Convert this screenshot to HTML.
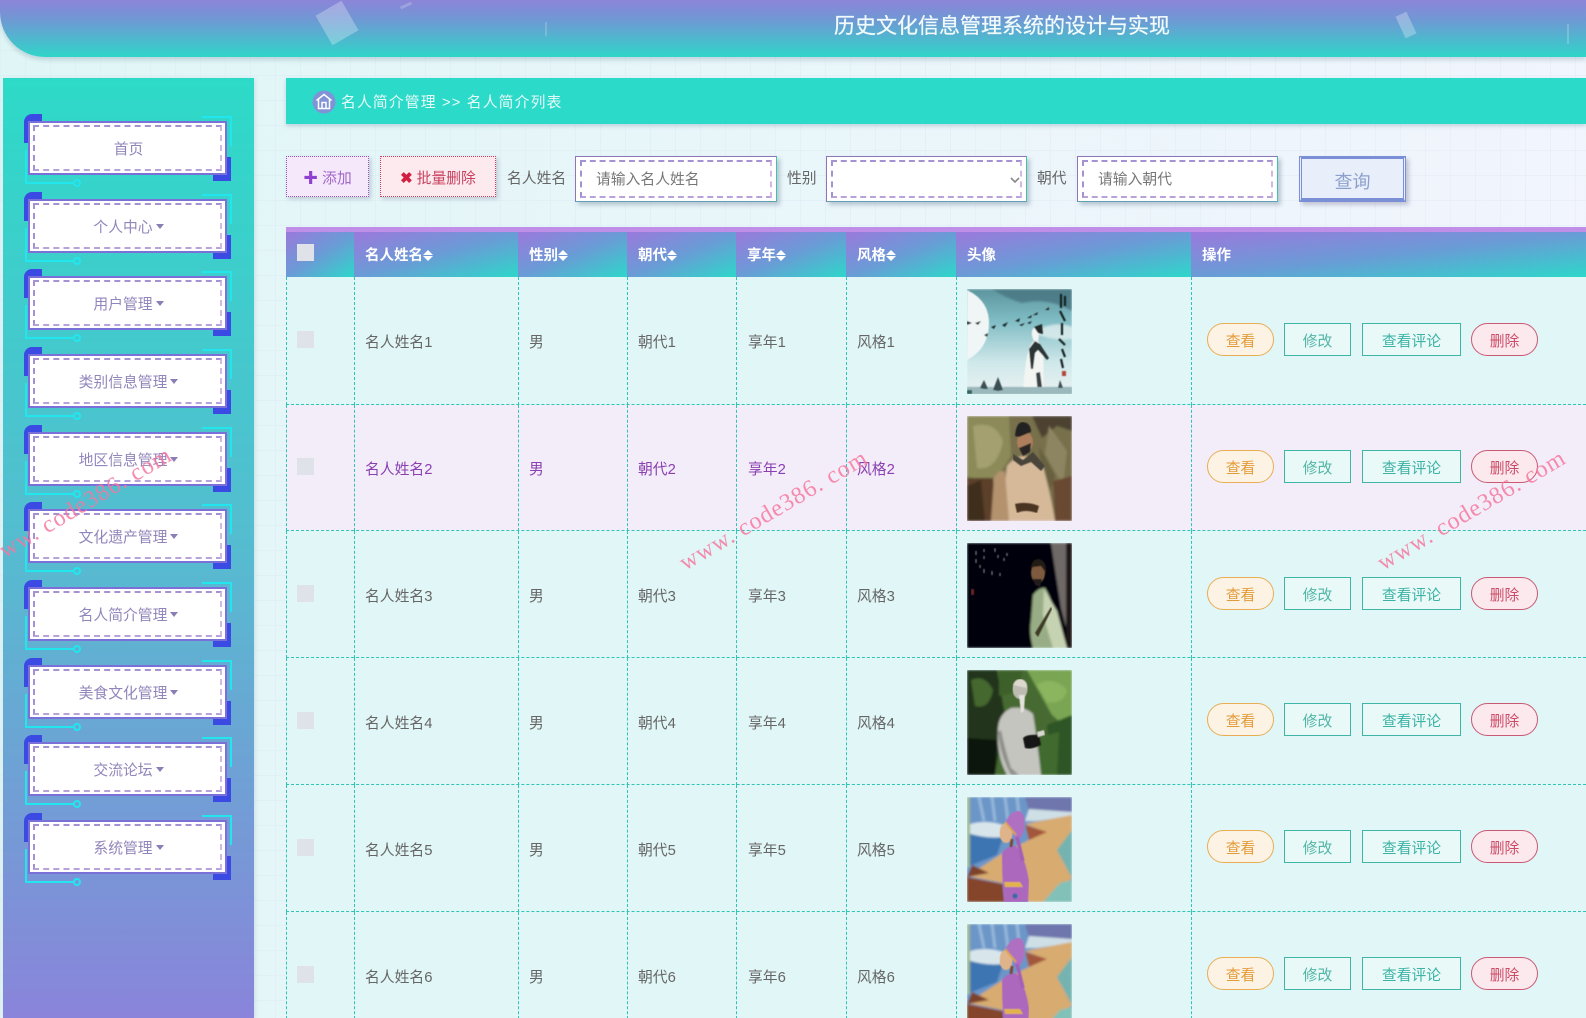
<!DOCTYPE html>
<html lang="zh"><head><meta charset="utf-8"><title>历史文化信息管理系统的设计与实现</title>
<style>
*{box-sizing:border-box}
html,body{margin:0;padding:0;width:1586px;height:1018px;overflow:hidden}
body{position:relative;font-family:"Liberation Sans","Noto Sans CJK SC",sans-serif;font-size:14.8px;color:#666;
background-color:#eaf6fb;background-image:linear-gradient(rgba(215,228,240,.3) 1px,transparent 1px),linear-gradient(90deg,rgba(215,228,240,.3) 1px,transparent 1px),linear-gradient(100deg,#e0f6f6,#f3f5fe);background-size:25px 25px,25px 25px,100% 100%}
.abs{position:absolute}
#hd{left:0;top:0;width:1586px;height:57px;background:linear-gradient(180deg,#8c84d8 0%,#6f99d4 35%,#2fd5c9 100%);border-bottom-left-radius:45px;box-shadow:0 3px 5px rgba(120,150,170,.35);overflow:hidden}
#hd .t{position:absolute;left:834px;top:11px;font-size:21px;line-height:31px;color:#f2fbfb;white-space:nowrap;-webkit-text-stroke:.25px #f2fbfb}
#hd i{position:absolute;background:rgba(255,255,255,.28)}
#sb{left:3px;top:78px;width:251px;height:940px;background:linear-gradient(180deg,#2ddac8 0%,#55bcd0 50%,#8a84da 100%);box-shadow:1px 1px 4px rgba(120,150,170,.25)}
.it{position:absolute;left:24px;width:208px;height:74px}
.it b{position:absolute;display:block}
.tl{left:0;top:0;width:18px;height:29px;border-left:4px solid #3a4ae2;border-top:7px solid #3a4ae2;border-top-left-radius:8px}
.br{left:189px;top:43px;width:18px;height:24px;border-right:5px solid #3a4ae2;border-bottom:6px solid #3a4ae2}
.tr{left:178px;top:2px;width:30px;height:30px;border-top:2px solid #22e6ee;border-right:2px solid #22e6ee}
.bl{left:1px;top:36px;width:50px;height:34px;border-left:2px solid #22e6ee;border-bottom:2px solid #22e6ee}
.dot{left:49px;top:65px;width:8px;height:8px;border-radius:50%;border:2px solid #22e6ee}
.bx{position:absolute;left:4px;top:7px;width:199px;height:54px;background:#fff;border:2px solid #7a70d8;color:#9186bb;font-size:14.8px;display:flex;align-items:center;justify-content:center;white-space:nowrap;padding-left:2px}
.bx:after{content:"";position:absolute;left:3px;top:2px;right:3px;bottom:2px;border:2px dashed;border-color:#a592d2 #d3b8e6 #b7a2da #a592d2}
.bx s{display:inline-block;width:0;height:0;margin-left:3px;border:4px solid transparent;border-top:5px solid #8a7fb5;border-bottom:0;text-decoration:none}
#bc{left:286px;top:78px;width:1300px;height:46px;background:#2cdaca;box-shadow:0 2px 4px rgba(120,150,170,.35);color:#e8fbf8;line-height:50px;padding-left:55px;white-space:nowrap;letter-spacing:1.15px}
.btn{position:absolute;top:156px;height:41px;line-height:45px;text-align:center;box-shadow:2px 2px 4px rgba(120,120,150,.35);white-space:nowrap}
.lb{position:absolute;top:168px;line-height:22px;color:#666;white-space:nowrap}
.ip{position:absolute;top:156px;height:46px;background:#fff;border:1px solid;border-color:#8d75b8 #3fc2b2 #5fa0b5 #8d75b8;box-shadow:3px 3px 4px rgba(110,130,150,.4);color:#777;line-height:47px;padding-left:20px;white-space:nowrap}
.ip:after{content:"";position:absolute;left:4px;top:3px;right:4px;bottom:3px;border:2px dashed;border-color:#a592d2 #d3b8e6 #b7a2da #a592d2}
#q{position:absolute;left:1299px;top:156px;width:107px;height:46px;background:#e8effb;border:3px double #7a8fd6;border-top:3px solid #7a8fd6;border-bottom:4px solid #7a8fd6;box-shadow:3px 3px 4px rgba(110,110,140,.35);color:#8d9fcc;font-size:18px;line-height:47px;text-align:center}
#strip{left:286px;top:227px;width:1300px;height:5px;background:#bf8ee6}
.th{position:absolute;top:232px;height:45px;background:linear-gradient(to bottom right,#9b79dc,#6a9bd6 50%,#2dd7ca);color:#fff;font-weight:bold;font-size:14.5px;line-height:48px;padding-left:11px;white-space:nowrap}
.th u{display:inline-block;vertical-align:-3px;width:10px;height:11px;position:relative;text-decoration:none}
.th u:before,.th u:after{content:"";position:absolute;left:0;border:5px solid transparent}
.th u:before{top:-2px;border-bottom:5px solid #fff;border-top:0}
.th u:after{top:4px;border-top:5px solid #fff;border-bottom:0}
.ck{position:absolute;left:297px;width:17px;height:17px;background:#e0e2ea}
.r{position:absolute;left:286px;width:1300px;border-bottom:1px dashed #2fc4b4;background:#e1f6f6}
.r.alt{background:#f3edf9;color:#8a3fb2}
.r span{position:absolute;top:50%;margin-top:-9px;line-height:22px;white-space:nowrap}
.r.l span{margin-top:-8px}
.r em{position:absolute;top:0;bottom:-1px;width:0;border-left:1px dashed #2fc4b4}
.r svg{position:absolute;left:681px;top:12px}
.a{position:absolute;height:33px;line-height:36px;text-align:center;font-size:14.8px;white-space:nowrap}
.v{left:921px;width:67px;border:1px solid #e8ad55;border-radius:17px;color:#e39a38;background:#fdf3e5}
.e{left:998px;width:67px;border:1px solid #3fb5a5;color:#52b5a6;background:#e9f9f8}
.c{left:1076px;width:99px;border:1px solid #3fb5a5;color:#3bb2a4;background:#e9f9f8}
.d{left:1185px;width:67px;border:1px solid #c85a75;border-radius:17px;color:#cc4a66;background:#fbe9ee}
.wm{position:absolute;font-family:"Liberation Serif",serif;font-size:24px;letter-spacing:1px;color:rgba(246,120,160,.85);white-space:nowrap;transform:translate(-50%,-50%) rotate(-30.5deg)}
</style></head><body>
<svg width="0" height="0" style="position:absolute"><defs>
<filter id="f" x="0" y="0" width="100%" height="100%"><feGaussianBlur stdDeviation="1"/></filter>
<filter id="g" x="0" y="0" width="100%" height="100%"><feGaussianBlur stdDeviation=".45"/></filter>
<linearGradient id="s1" x1="0" y1="0" x2="0" y2="1"><stop offset="0" stop-color="#5d959e"/><stop offset=".3" stop-color="#7fbcc4"/><stop offset=".7" stop-color="#cfe8ea"/><stop offset=".92" stop-color="#e3eff0"/><stop offset="1" stop-color="#a5c2c5"/></linearGradient>
<symbol id="p1" viewBox="0 0 105 105"><g filter="url(#f)"><rect width="105" height="105" fill="url(#s1)"/>
<path d="M25 0H105V22Q80 8 55 14Q40 10 25 0Z" fill="#487681" opacity=".8"/>
<path d="M72 40Q90 32 105 38V50Q88 52 72 46Z" fill="#dfeeee" opacity=".8"/></g>
<g filter="url(#g)"><path d="M0 1Q23 12 22 36Q21 60 0 71Z" fill="#f0f6f6"/>
<path d="M0 32l5 2-5 2zM8 34l6-2-3 4zM24 38l5-2-2 4zM35 36l6-3-3 5zM48 32l5-3-1 4zM52 36l6-2-3 3zM60 34l5-2-2 3zM60 29l5-3-1 3zM66 26l5-3-1 3zM78 21l4-3v3zM17 46l4-2-1 4z" fill="#1e2a2c"/>
<path d="M56 105Q58 72 62 60Q64 54 67 52Q64 46 65 42Q67 37 71 37Q73 45 71 52L76 60Q77 80 76 105Z" fill="#f3f5f3"/>
<path d="M67 38l8-3 1 10-5-1z" fill="#20292a"/><path d="M62 60l6-8 5 3 9 14-2 2-9-10-3 3-2 16h-2z" fill="#2b3536"/><path d="M69 84l2 21h5l-3-22z" fill="#3a4344"/>
<rect y="98" width="105" height="7" fill="#9bb9bc"/><path d="M17 100l-4-1 4-8 4 9zM31 102l-5-1 5-13 5 13zM91 99l2-8 3 8z" fill="#3a5055"/><rect y="101" x="0" width="5" height="4" fill="#2f6660"/>
<path d="M94 5v14M98 7v10M93 22l5 10M95 34v12M92 50l6 6M95 60l3 8M94 70l2 9" stroke="#182022" stroke-width="2.2" fill="none"/><rect x="95" y="82" width="4" height="5" fill="#b4443c"/></g></symbol>
<symbol id="p2" viewBox="0 0 105 105"><g filter="url(#f)"><rect width="105" height="105" fill="#77704c"/>
<path d="M0 0H42L44 40 25 70 0 60Z" fill="#8b8a58"/><path d="M6 10Q28 4 36 25 30 55 10 52Z" fill="#a4a070"/><path d="M65 0H105V15L90 10 75 22Z" fill="#4d4332"/><path d="M82 10L100 35 96 70 78 38Z" fill="#8d8562"/><path d="M72 30L88 60 84 75 74 50Z" fill="#67603f"/>
<path d="M0 62L26 62 30 105H0Z" fill="#5c402a"/><path d="M0 70L14 64 18 105H0Z" fill="#3f2f1c"/><path d="M86 65L105 60V105H88Z" fill="#6a4a30"/>
<path d="M40 50Q46 42 56 40 70 42 76 50 84 80 88 105H38Q36 80 40 50Z" fill="#d6b999"/><path d="M27 62Q32 52 38 56L42 105H24Z" fill="#b4926e"/></g>
<g filter="url(#g)"><ellipse cx="58" cy="26" rx="8" ry="10" fill="#ad7f5c"/><path d="M48 20Q49 6 56 6 64 7 64 16L52 21Z" fill="#212023"/><path d="M52 32L64 27 63 36 56 40Z" fill="#2b2825"/>
<path d="M46 38L56 44 66 36 78 50 74 55 64 46 54 50 46 44Z" fill="#48443a"/><path d="M48 88Q60 85 72 90L70 97Q58 93 50 97Z" fill="#4a3424"/></g></symbol>
<symbol id="p3" viewBox="0 0 105 105"><g filter="url(#f)"><rect width="105" height="105" fill="#050608"/>
<path d="M84 0H99L101 45 100 88 94 65Z" fill="#6e6966"/><path d="M99 0H105V105H99Z" fill="#1a1714"/>
<path d="M66 52Q72 44 78 45 88 60 94 105H66Q62 90 64 78Z" fill="#98ad85"/><path d="M77 46L90 68 100 105H86L76 72Z" fill="#c6d3b2"/></g>
<g filter="url(#g)"><ellipse cx="71" cy="30" rx="7" ry="10" fill="#7d5a3c"/><path d="M64 26Q64 16 72 16 80 18 79 30L74 23 66 24Z" fill="#241a12"/><path d="M66 36L75 36 73 44 68 42Z" fill="#241f1a"/>
<path d="M68 90L84 64 85 66 71 94Z" fill="#3c3a28"/>
<path d="M17 6v3M17 13v3M28 5v4M31 12v3M37 15v3M40 10v3M9 8v4M9 16v4M13 22v3M17 26v4M25 28v4M33 30v3" stroke="#a8a8a0" stroke-width="1.2" opacity=".75"/><rect x="4" y="46" width="3" height="6" fill="#6a2320"/></g></symbol>
<symbol id="p4" viewBox="0 0 105 105"><g filter="url(#f)"><rect width="105" height="105" fill="#476b30"/>
<path d="M0 0H30L38 45 28 105H0Z" fill="#22351f"/><path d="M60 0H105V62L85 45Z" fill="#7aa652"/><path d="M32 0L56 0 50 22 32 26Z" fill="#3e6129"/><path d="M4 10Q18 4 26 20 22 40 8 36Z" fill="#44672f"/><path d="M0 68L30 70 28 105H0Z" fill="#11160e"/><path d="M80 55L105 45V105H84Z" fill="#2f5528"/><path d="M70 15Q85 5 100 20 96 35 80 32Z" fill="#8cb561"/><path d="M62 70L92 62 90 105H76Z" fill="#3f6a2e"/>
<path d="M31 58Q32 44 44 38 58 36 66 44 70 68 74 105H40Q29 85 31 58Z" fill="#c5c5c0"/><path d="M34 60Q38 80 44 98L52 105H44Q33 85 31 62Z" fill="#8f8f8a"/></g>
<g filter="url(#g)"><ellipse cx="53" cy="19" rx="7.500" ry="10" fill="#bebcb2"/><path d="M46 15Q48 9 54 9 61 11 60 18Z" fill="#dcd8ce"/><path d="M52 25L58 25 57 41 54 43Z" fill="#e4e2dc"/>
<path d="M56 68Q60 64 72 65L74 75Q64 80 58 78Z" fill="#151415"/><path d="M70 62l7-2 1 5-7 2z" fill="#d8d8d2"/></g></symbol>
<symbol id="p5" viewBox="0 0 105 105"><g filter="url(#f)"><rect width="105" height="105" fill="#6c96c8"/>
<path d="M58 0H105V16L62 14Z" fill="#6e76ad"/><path d="M62 12L105 15 105 19 70 24 58 24Z" fill="#cfdfe6"/>
<path d="M12 0l5 24M25 0l3 24M38 0l3 24M50 0l2 18" stroke="#96b8da" stroke-width="3"/>
<path d="M0 28Q18 22 36 28L40 40Q18 44 0 36Z" fill="#d8e6ec"/>
<path d="M0 36Q20 42 36 40L30 58 5 68H0Z" fill="#3d74b2"/><rect width="3" height="70" fill="#9db890"/>
<path d="M58 27L105 18V34L90 53 105 81 80 105H62L36 86 0 79 36 56 78 35Z" fill="#d8ab70"/><path d="M58 28L80 35 62 43Z" fill="#a2563a"/>
<path d="M0 80L36 87 38 105H0Z" fill="#854429"/><path d="M5 68L22 76 0 80Z" fill="#7d4329"/>
<path d="M105 33L90 53 105 81Z" fill="#74b3b0"/><path d="M76 105L93 86 105 83V105Z" fill="#82c1b8"/></g>
<g filter="url(#g)"><path d="M35 56Q40 49 49 49 58 60 62 84L61 105H37Q35 80 35 56Z" fill="#ab68bd"/><path d="M37 85H53L56 90H38Z" fill="#e2b24e"/>
<ellipse cx="39" cy="36" rx="6.500" ry="10" fill="#e0b48a"/><path d="M38 26Q44 13 53 14 59 18 57 32 55 43 48 43 46 32 38 26Z" fill="#b06fc2"/><path d="M38 25L49 38" stroke="#d9a648" stroke-width="2"/><path d="M50 40L56 64" stroke="#a35fb8" stroke-width="3.500"/><path d="M45 42L44 50" stroke="#7a4a3a" stroke-width="3"/><circle cx="48" cy="99" r="2.600" fill="#3a6aa8"/></g></symbol>
</defs></svg>

<div id="hd" class="abs">
<i style="left:322px;top:6px;width:30px;height:34px;transform:rotate(-30deg)"></i>
<i style="left:1400px;top:13px;width:12px;height:24px;transform:rotate(-25deg)"></i>
<i style="left:545px;top:22px;width:2px;height:14px;background:rgba(255,255,255,.18)"></i>
<i style="left:400px;top:4px;width:12px;height:3px;transform:rotate(-25deg);background:rgba(255,255,255,.2)"></i>
<i style="left:1567px;top:24px;width:2px;height:20px;background:rgba(255,255,255,.2)"></i>
<div class="t">历史文化信息管理系统的设计与实现</div></div>

<div id="sb" class="abs"></div>
<div class="it" style="top:114px"><b class="tl"></b><b class="br"></b><b class="tr"></b><b class="bl"></b><b class="dot"></b><div class="bx">首页</div></div>
<div class="it" style="top:192px"><b class="tl"></b><b class="br"></b><b class="tr"></b><b class="bl"></b><b class="dot"></b><div class="bx">个人中心<s></s></div></div>
<div class="it" style="top:269px"><b class="tl"></b><b class="br"></b><b class="tr"></b><b class="bl"></b><b class="dot"></b><div class="bx">用户管理<s></s></div></div>
<div class="it" style="top:347px"><b class="tl"></b><b class="br"></b><b class="tr"></b><b class="bl"></b><b class="dot"></b><div class="bx">类别信息管理<s></s></div></div>
<div class="it" style="top:425px"><b class="tl"></b><b class="br"></b><b class="tr"></b><b class="bl"></b><b class="dot"></b><div class="bx">地区信息管理<s></s></div></div>
<div class="it" style="top:502px"><b class="tl"></b><b class="br"></b><b class="tr"></b><b class="bl"></b><b class="dot"></b><div class="bx">文化遗产管理<s></s></div></div>
<div class="it" style="top:580px"><b class="tl"></b><b class="br"></b><b class="tr"></b><b class="bl"></b><b class="dot"></b><div class="bx">名人简介管理<s></s></div></div>
<div class="it" style="top:658px"><b class="tl"></b><b class="br"></b><b class="tr"></b><b class="bl"></b><b class="dot"></b><div class="bx">美食文化管理<s></s></div></div>
<div class="it" style="top:735px"><b class="tl"></b><b class="br"></b><b class="tr"></b><b class="bl"></b><b class="dot"></b><div class="bx">交流论坛<s></s></div></div>
<div class="it" style="top:813px"><b class="tl"></b><b class="br"></b><b class="tr"></b><b class="bl"></b><b class="dot"></b><div class="bx">系统管理<s></s></div></div>

<div id="bc" class="abs">名人简介管理 &gt;&gt; 名人简介列表</div>
<svg class="abs" style="left:312px;top:90px" width="24" height="24" viewBox="0 0 24 24"><circle cx="12" cy="12" r="11.500" fill="#7f93d6"/><path d="M4.500 10.500L12 4.500l7.500 6M6.500 9.500V18.500H17.500V9.500M10 18.500V12.500H14V18.500" fill="none" stroke="#fff" stroke-width="1.500"/></svg>

<div class="btn" style="left:286px;width:83px;background:#f6e8fb;border:1px dotted #8e58b8;color:#a066c8"><span style="color:#9040d0;font-weight:bold">✚</span> 添加</div>
<div class="btn" style="left:380px;width:116px;background:#fdeaee;border:1px dotted #c8405f;color:#c8405f"><span style="color:#d01f40;font-weight:bold">✖</span> 批量删除</div>
<div class="lb" style="left:507px">名人姓名</div>
<div class="ip" style="left:575px;width:202px">请输入名人姓名</div>
<div class="lb" style="left:787px">性别</div>
<div class="ip" style="left:826px;width:201px"><svg style="position:absolute;right:6px;top:20px" width="10" height="7" viewBox="0 0 10 7"><path d="M1 1l4 4 4-4" fill="none" stroke="#888" stroke-width="1.600"/></svg></div>
<div class="lb" style="left:1037px">朝代</div>
<div class="ip" style="left:1077px;width:201px">请输入朝代</div>
<div id="q">查询</div>

<div id="strip" class="abs"></div>
<div class="th" style="left:286px;width:68px"></div>
<div class="ck" style="top:244px"></div>
<div class="th" style="left:354px;width:164px">名人姓名<u></u></div>
<div class="th" style="left:518px;width:109px">性别<u></u></div>
<div class="th" style="left:627px;width:109px">朝代<u></u></div>
<div class="th" style="left:736px;width:110px">享年<u></u></div>
<div class="th" style="left:846px;width:110px">风格<u></u></div>
<div class="th" style="left:956px;width:235px">头像</div>
<div class="th" style="left:1191px;width:395px">操作</div>

<div class="r" style="top:277px;height:128px"><em style="left:0"></em><em style="left:68px"></em><em style="left:232px"></em><em style="left:341px"></em><em style="left:450px"></em><em style="left:560px"></em><em style="left:670px"></em><em style="left:905px"></em>
<span style="left:79px">名人姓名1</span><span style="left:243px">男</span><span style="left:352px">朝代1</span><span style="left:462px">享年1</span><span style="left:571px">风格1</span>
<svg width="105" height="105"><use href="#p1"/></svg>
<div class="a v" style="top:46px">查看</div><div class="a e" style="top:46px">修改</div><div class="a c" style="top:46px">查看评论</div><div class="a d" style="top:46px">删除</div></div>
<div class="ck" style="top:331px"></div>

<div class="r alt" style="top:405px;height:126px"><em style="left:0"></em><em style="left:68px"></em><em style="left:232px"></em><em style="left:341px"></em><em style="left:450px"></em><em style="left:560px"></em><em style="left:670px"></em><em style="left:905px"></em>
<span style="left:79px">名人姓名2</span><span style="left:243px">男</span><span style="left:352px">朝代2</span><span style="left:462px">享年2</span><span style="left:571px">风格2</span>
<svg style="top:11px" width="105" height="105"><use href="#p2"/></svg>
<div class="a v" style="top:45px">查看</div><div class="a e" style="top:45px">修改</div><div class="a c" style="top:45px">查看评论</div><div class="a d" style="top:45px">删除</div></div>
<div class="ck" style="top:458px"></div>

<div class="r l" style="top:531px;height:127px"><em style="left:0"></em><em style="left:68px"></em><em style="left:232px"></em><em style="left:341px"></em><em style="left:450px"></em><em style="left:560px"></em><em style="left:670px"></em><em style="left:905px"></em>
<span style="left:79px">名人姓名3</span><span style="left:243px">男</span><span style="left:352px">朝代3</span><span style="left:462px">享年3</span><span style="left:571px">风格3</span>
<svg width="105" height="105"><use href="#p3"/></svg>
<div class="a v" style="top:46px">查看</div><div class="a e" style="top:46px">修改</div><div class="a c" style="top:46px">查看评论</div><div class="a d" style="top:46px">删除</div></div>
<div class="ck" style="top:585px"></div>

<div class="r l" style="top:658px;height:127px"><em style="left:0"></em><em style="left:68px"></em><em style="left:232px"></em><em style="left:341px"></em><em style="left:450px"></em><em style="left:560px"></em><em style="left:670px"></em><em style="left:905px"></em>
<span style="left:79px">名人姓名4</span><span style="left:243px">男</span><span style="left:352px">朝代4</span><span style="left:462px">享年4</span><span style="left:571px">风格4</span>
<svg width="105" height="105"><use href="#p4"/></svg>
<div class="a v" style="top:45px">查看</div><div class="a e" style="top:45px">修改</div><div class="a c" style="top:45px">查看评论</div><div class="a d" style="top:45px">删除</div></div>
<div class="ck" style="top:712px"></div>

<div class="r l" style="top:785px;height:127px"><em style="left:0"></em><em style="left:68px"></em><em style="left:232px"></em><em style="left:341px"></em><em style="left:450px"></em><em style="left:560px"></em><em style="left:670px"></em><em style="left:905px"></em>
<span style="left:79px">名人姓名5</span><span style="left:243px">男</span><span style="left:352px">朝代5</span><span style="left:462px">享年5</span><span style="left:571px">风格5</span>
<svg width="105" height="105"><use href="#p5"/></svg>
<div class="a v" style="top:45px">查看</div><div class="a e" style="top:45px">修改</div><div class="a c" style="top:45px">查看评论</div><div class="a d" style="top:45px">删除</div></div>
<div class="ck" style="top:839px"></div>

<div class="r l" style="top:912px;height:127px"><em style="left:0"></em><em style="left:68px"></em><em style="left:232px"></em><em style="left:341px"></em><em style="left:450px"></em><em style="left:560px"></em><em style="left:670px"></em><em style="left:905px"></em>
<span style="left:79px">名人姓名6</span><span style="left:243px">男</span><span style="left:352px">朝代6</span><span style="left:462px">享年6</span><span style="left:571px">风格6</span>
<svg width="105" height="105"><use href="#p5"/></svg>
<div class="a v" style="top:45px">查看</div><div class="a e" style="top:45px">修改</div><div class="a c" style="top:45px">查看评论</div><div class="a d" style="top:45px">删除</div></div>
<div class="ck" style="top:966px"></div>

<div class="wm" style="left:78px;top:508px">www. code386. com</div>
<div class="wm" style="left:774px;top:511px">www. code386. com</div>
<div class="wm" style="left:1472px;top:511px">www. code386. com</div>
</body></html>
